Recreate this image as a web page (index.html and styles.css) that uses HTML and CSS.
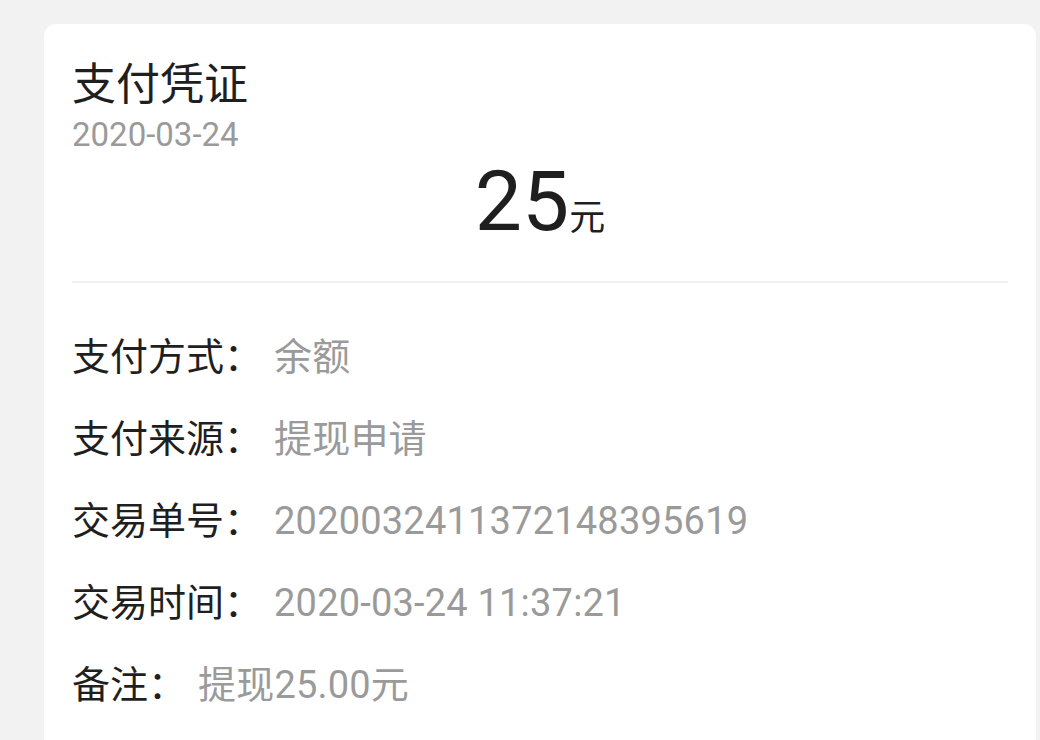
FILE: index.html
```html
<!DOCTYPE html>
<html lang="zh-CN">
<head>
<meta charset="utf-8">
<title>支付凭证</title>
<link rel="stylesheet" href="styles.css">
</head>
<body>
<div class="card">
  <div class="head">
    <div class="title">支付凭证</div>
    <div class="date">2020-03-24</div>
    <div class="amount"><span class="num">25</span><span class="unit">元</span></div>
  </div>
  <div class="rows">
    <div class="row"><span class="label">支付方式：</span><span class="value">余额</span></div>
    <div class="row"><span class="label">支付来源：</span><span class="value">提现申请</span></div>
    <div class="row"><span class="label">交易单号：</span><span class="value">2020032411372148395619</span></div>
    <div class="row"><span class="label">交易时间：</span><span class="value">2020-03-24 11:37:21</span></div>
    <div class="row"><span class="label">备注：</span><span class="value">提现25.00元</span></div>
  </div>
</div>
</body>
</html>
```
FILE: styles.css
```css
html, body {
  margin: 0;
  padding: 0;
  background: #f2f2f2;
  height: 740px;
  overflow: hidden;
}
body {
  padding: 24px 4px 0 44px;
  box-sizing: border-box;
  font-family: Roboto, "Noto Sans CJK SC", sans-serif;
  color: #1f1f1f;
}
.card {
  background: #ffffff;
  border-radius: 12px;
  padding: 0 28px;
  height: 760px;
}
.head {
  padding-top: 34px;
  border-bottom: 2px solid #f0f0f0;
  padding-bottom: 11px;
}
.title {
  font-size: 44px;
  line-height: 54px;
  color: #1f1f1f;
}
.date {
  font-size: 33px;
  line-height: 36px;
  margin-top: 5px;
  color: #9a9a9a;
}
.amount {
  text-align: center;
  line-height: 90px;
  margin-top: 4px;
}
.num {
  font-size: 84px;
}
.unit {
  font-size: 36px;
}
.rows {
  padding-top: 33px;
}
.row {
  height: 82px;
  line-height: 82px;
  font-size: 38px;
  display: flex;
}
.label {
  color: #1f1f1f;
  margin-right: 12px;
}
.value {
  color: #9a9a9a;
  letter-spacing: 0.2px;
}
```
